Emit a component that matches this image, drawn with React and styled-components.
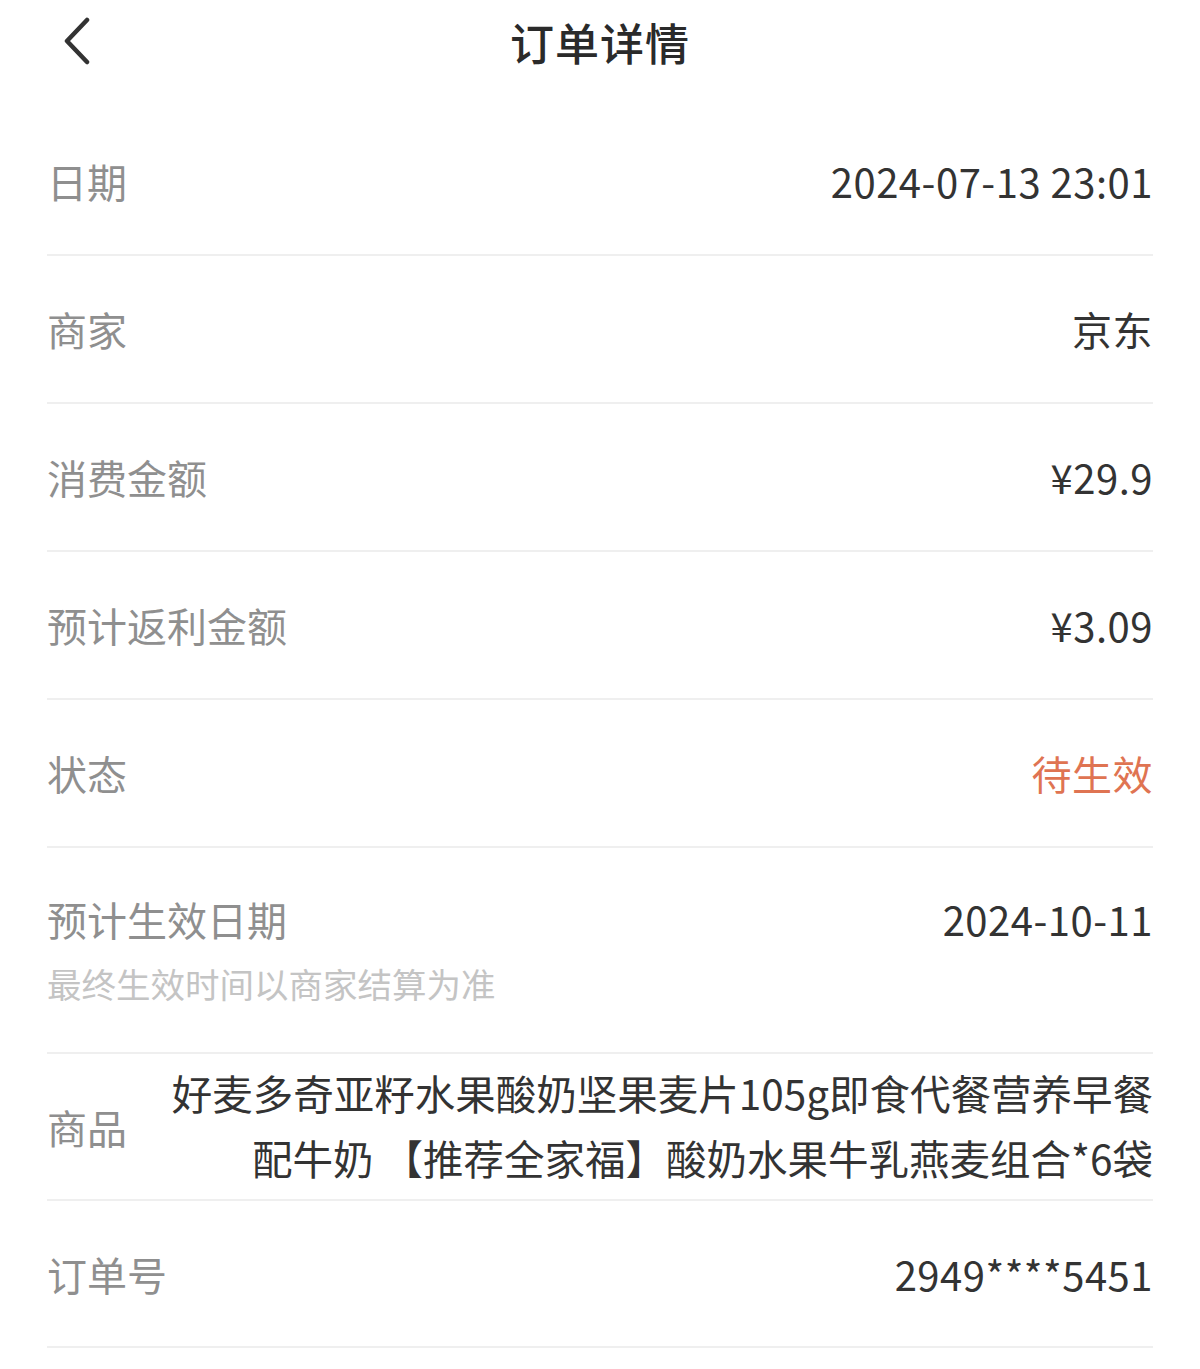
import React from 'react';
import styled, { createGlobalStyle } from 'styled-components';

const rows = [
  { label: '日期', value: '2024-07-13 23:01' },
  { label: '商家', value: '京东' },
  { label: '消费金额', value: '¥29.9' },
  { label: '预计返利金额', value: '¥3.09' },
  { label: '状态', value: '待生效', accent: true },
];

export default () => (
  <Page>
    <GlobalStyle />
    <Header>
      <Back aria-label="返回">
        <svg width="30" height="48" viewBox="0 0 30 48">
          <polyline points="25,3 5,24 25,45" fill="none" stroke="#333" strokeWidth="4.5" strokeLinecap="round" strokeLinejoin="round" />
        </svg>
      </Back>
      <Title>订单详情</Title>
    </Header>
    <List>
      {rows.map((r) => (
        <Row key={r.label}>
          <Label>{r.label}</Label>
          <Value $accent={r.accent}>{r.value}</Value>
        </Row>
      ))}
      <Row $tall>
        <LabelGroup>
          <Label>预计生效日期</Label>
          <Note>最终生效时间以商家结算为准</Note>
        </LabelGroup>
        <Value>2024-10-11</Value>
      </Row>
      <Row $h={147}>
        <Label>商品</Label>
        <Goods>
          <span>好麦多奇亚籽水果酸奶坚果麦片105g即食代餐营养早餐</span>
          <span>配牛奶 【推荐全家福】酸奶水果牛乳燕麦组合*6袋</span>
        </Goods>
      </Row>
      <Row $h={147}>
        <Label>订单号</Label>
        <Value>2949****5451</Value>
      </Row>
    </List>
  </Page>
);

const GlobalStyle = createGlobalStyle`
  body {
    margin: 0;
    background: #fff;
    font-family: "Noto Sans CJK SC", "Noto Sans", sans-serif;
  }
`

const Page = styled.div`
  width: 1200px;
  min-height: 1369px;
  background: #fff;
`

const Header = styled.header`
  position: relative;
  height: 84px;
  display: flex;
  align-items: center;
  justify-content: center;
`

const Back = styled.div`
  position: absolute;
  left: 62px;
  top: 17px;
  width: 30px;
  height: 48px;
`

const Title = styled.h1`
  margin: 0;
  font-size: 44px;
  font-weight: 500;
  color: #2a2a2a;
  letter-spacing: 1px;
`

const List = styled.section`
  margin: 24px 47px 0;
`

const Row = styled.div`
  display: flex;
  justify-content: space-between;
  align-items: ${(p) => (p.$tall ? 'flex-start' : 'center')};
  min-height: ${(p) => (p.$tall ? '206px' : `${p.$h || 148}px`)};
  box-sizing: border-box;
  padding-top: ${(p) => (p.$tall ? '44px' : '0')};
  border-bottom: 2px solid #efefef;
`

const LabelGroup = styled.div`
  display: flex;
  flex-direction: column;
  gap: 14px;
`

const Label = styled.div`
  font-size: 40px;
  color: #8f8f8f;
  line-height: 54px;
  white-space: nowrap;
`

const Note = styled.div`
  font-size: 34.5px;
  color: #c4c4c4;
  line-height: 46px;
`

const Value = styled.div`
  font-size: 40px;
  line-height: 54px;
  color: ${(p) => (p.$accent ? '#df7452' : '#333')};
  letter-spacing: 0.5px;
  text-align: right;
`

const Goods = styled.div`
  display: flex;
  flex-direction: column;
  align-items: flex-end;
  font-size: 40.5px;
  line-height: 65px;
  color: #333;
  padding: 4px 0 8px;
`
